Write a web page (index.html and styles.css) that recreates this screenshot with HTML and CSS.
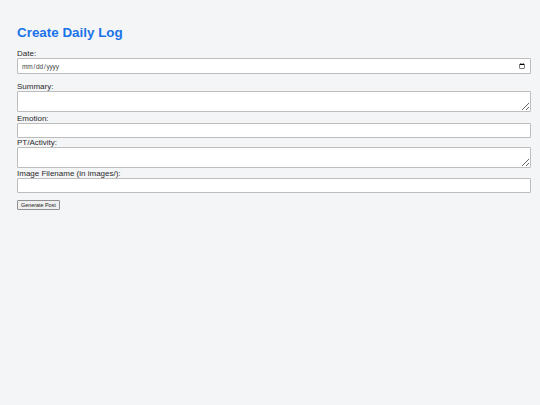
FILE: index.html
```html
<!DOCTYPE html>
<html lang="en">
<head>
<meta charset="utf-8">
<title>Create Daily Log</title>
<link rel="stylesheet" href="styles.css">
</head>
<body>
<h1 class="title">Create Daily Log</h1>
<form class="log-form">
  <label class="field-label" for="date">Date:</label>
  <input class="field field-date" type="date" id="date">
  <label class="field-label" for="summary">Summary:</label>
  <textarea class="field field-area field-summary" id="summary"></textarea>
  <label class="field-label" for="emotion">Emotion:</label>
  <input class="field field-text field-emotion" type="text" id="emotion">
  <label class="field-label" for="activity">PT/Activity:</label>
  <textarea class="field field-area field-activity" id="activity"></textarea>
  <label class="field-label" for="image">Image Filename (in images/):</label>
  <input class="field field-text field-image" type="text" id="image">
  <button class="submit" type="button">Generate Post</button>
</form>
</body>
</html>
```

FILE: styles.css
```css
html, body {
  margin: 0;
  background: #f4f5f7;
}
body {
  padding: 0 17px;
  font-family: "Liberation Sans", Arial, sans-serif;
  font-size: 8px;
  color: #222;
}
.title {
  margin: 25px 0 9px;
  font-size: 13.4px;
  line-height: 15px;
  font-weight: bold;
  color: #1a73e8;
}
.log-form {
  display: flex;
  flex-direction: column;
  align-items: flex-start;
}
.field-label {
  display: block;
  line-height: 9px;
  height: 9px;
  font-size: 8px;
  color: #2a2a2a;
}
.field {
  display: block;
  width: 100%;
  margin: 0;
  padding: 3px;
  border: 1px solid #bdbdbd;
  border-radius: 1px;
  background: #fff;
  font-family: "Liberation Sans", Arial, sans-serif;
  font-size: 7px;
  color: #333;
  outline: none;
}
.field-date {
  height: 8px;
  margin-bottom: 8px;
  font-family: "Liberation Sans", Arial, sans-serif;
  font-size: 6.5px;
  letter-spacing: -0.2px;
  color: #444;
}
.field-text {
  height: 7px;
}
.field-area {
  height: 13px;
  resize: vertical;
}
.field-summary {
  margin-bottom: 2px;
}
.field-emotion {
  margin-bottom: 0;
}
.field-activity {
  margin-bottom: 1px;
}
.field-image {
  margin-bottom: 7px;
}
.submit {
  margin: 0;
  padding: 1px 3px;
  height: 10px;
  font-family: "Liberation Sans", Arial, sans-serif;
  font-size: 5.4px;
  line-height: 6px;
  color: #222;
  background: #efefef;
  border: 1px solid #8f8f8f;
  border-radius: 1px;
}
```
